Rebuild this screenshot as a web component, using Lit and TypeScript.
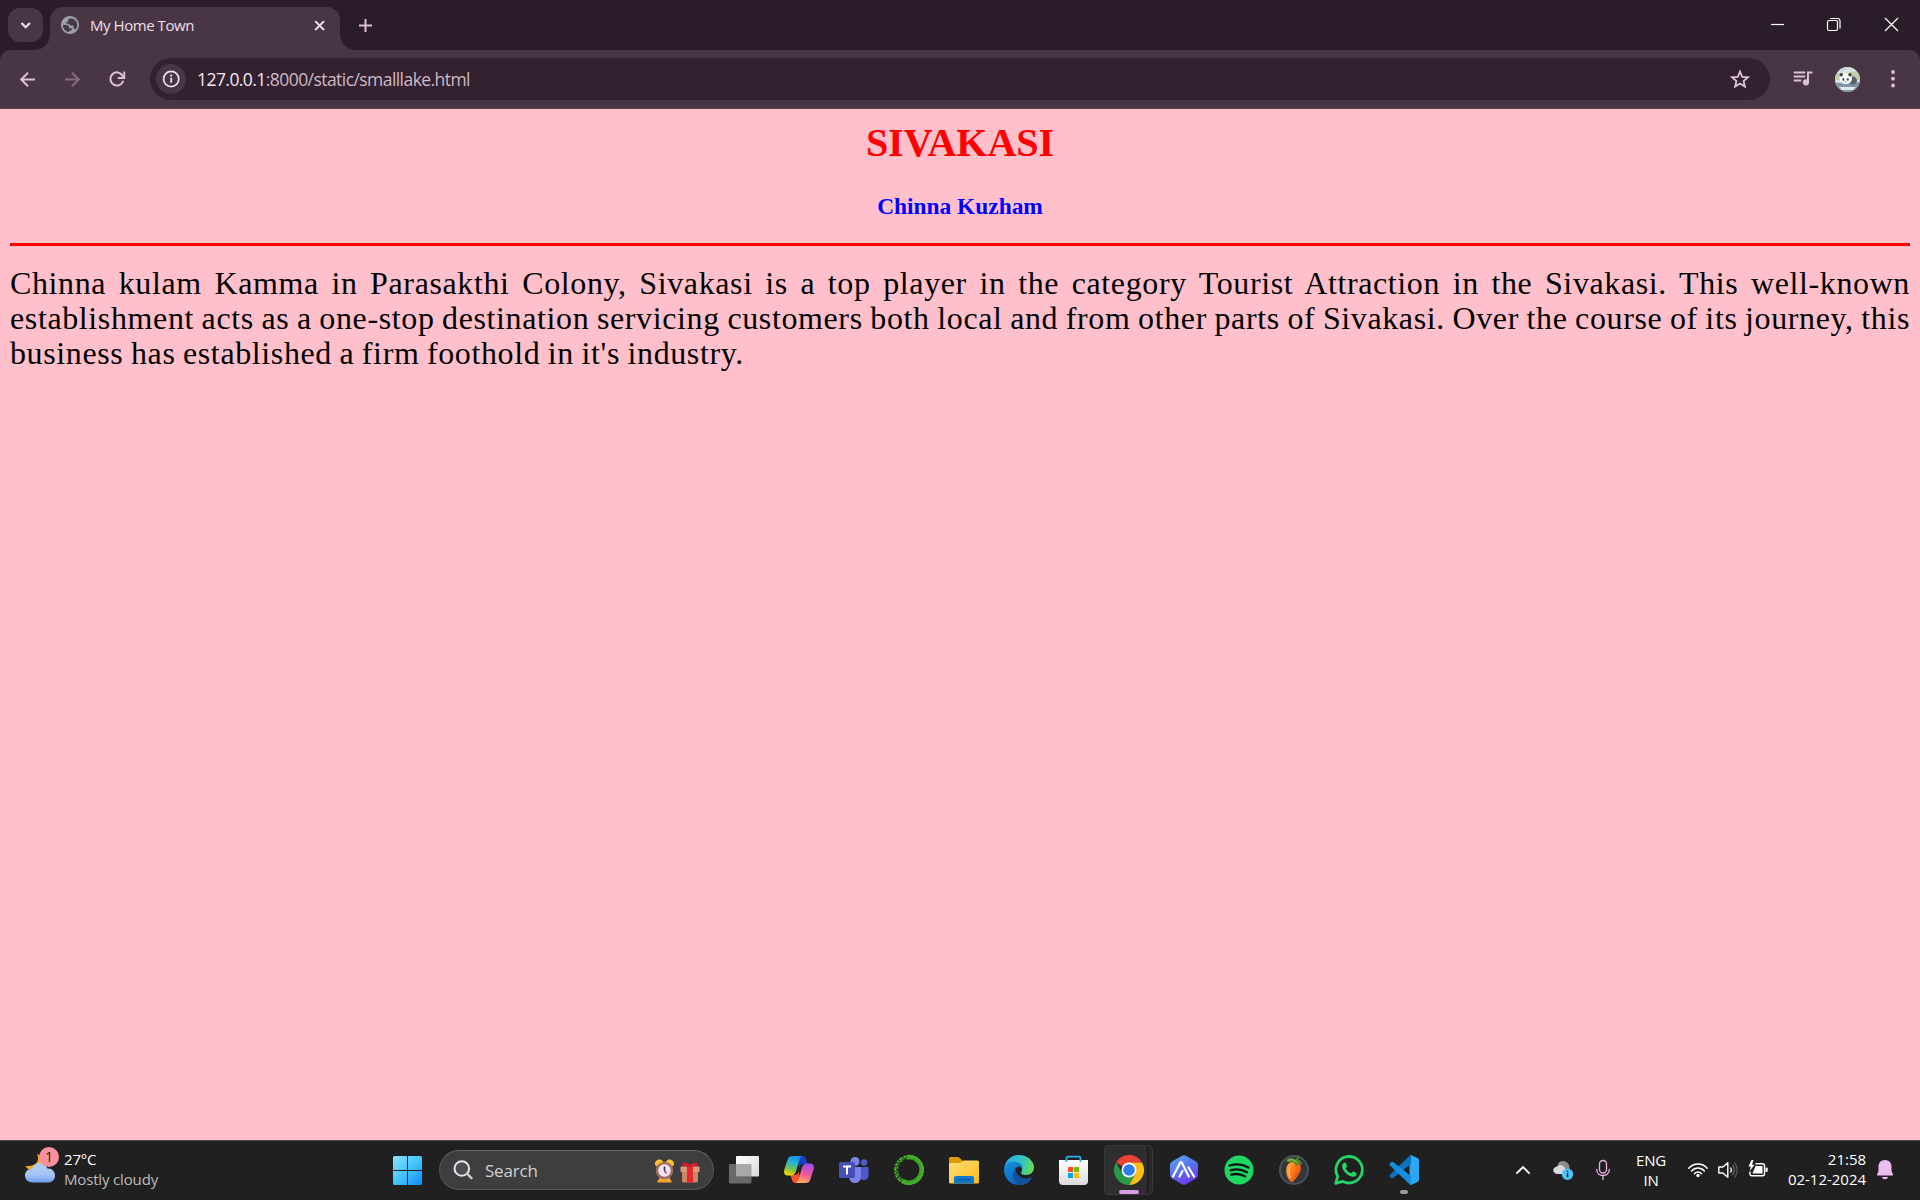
import { LitElement, html, css, svg } from "lit";
import { customElement } from "lit/decorators.js";

const icon = (w: number, h: number, body: unknown) =>
  html`<svg width=${w} height=${h} viewBox="0 0 ${w} ${h}" fill="none">${body}</svg>`;

@customElement("browser-tabs")
class BrowserTabs extends LitElement {
  static styles = css`
    :host { display: block; background: #2b1c29; height: 50px; }
    .strip { display: flex; height: 50px; padding-left: 8px; box-sizing: border-box; }
    svg { display: block; flex: none; }
    .search { margin-top: 8px; width: 35px; height: 34px; border-radius: 12px; background: #493644; }
    .tab { position: relative; margin: 7px 0 0 7px; width: 290px; height: 43px; box-sizing: border-box;
      border-radius: 13px 13px 0 0; background: #493644; display: flex; align-items: center; padding: 0 12px 7px 11px; }
    .tab::before, .tab::after { content: ""; position: absolute; bottom: 0; width: 15px; height: 15px; }
    .tab::before { left: -15px; background: radial-gradient(circle at 0 0, transparent 14.5px, #493644 15.2px); }
    .tab::after { right: -15px; background: radial-gradient(circle at 100% 0, transparent 14.5px, #493644 15.2px); }
    .title { flex: 1; margin-left: 11px; font: 15px/20px "Open Sans", "Noto Sans", sans-serif; letter-spacing: -0.45px; color: #f0dfea; white-space: nowrap; }
    .plus { margin: 16px 0 0 16px; }
    .win { margin-left: auto; display: flex; padding-top: 15px; padding-right: 19px; }
    .max { margin: 0 39px 0 37px; }
  `;
  render() {
    return html`<div class="strip">
      <div class="search">${icon(35, 34, svg`<path d="M13.500 15l4.200 4.200 4.200-4.200" stroke="#f3e0ee" stroke-width="2.200"/>`)}</div>
      <div class="tab">
        <svg width="18" height="18" viewBox="2 2 20 20"><path fill="#9aa0a6" d="M12 2C6.480 2 2 6.480 2 12s4.480 10 10 10 10-4.480 10-10S17.520 2 12 2zm-1 17.930c-3.950-.49-7-3.850-7-7.930h3.500c2.200 0 3.500.8 3.500 2.500v1h3v1.500c0 1.100-.9 1.500-3 1.500v1.430zm6.900-2.540c-.26-.81-1-1.390-1.900-1.390v-2c0-1-.6-1.500-1.700-1.500C12 12.500 11 11.800 11 10.500H8.500C7.600 10.500 7.500 9 8.500 8.500H10V7c0-1.100.9-2.300 2.500-2.300.9 0 2 .1 2.500.4 2.930 1.190 5 3.550 5 6.900 0 2.080-.8 3.970-2.100 5.390z"/></svg>
        <span class="title">My Home Town</span>
        ${icon(17, 17, svg`<path d="M4.200 4.200l8.800 8.800m0-8.800l-8.800 8.800" stroke="#f3e0ee" stroke-width="1.900"/>`)}
      </div>
      <div class="plus">${icon(19, 19, svg`<path d="M9.500 3v13M3 9.500h13" stroke="#dcc0d4" stroke-width="2"/>`)}</div>
      <div class="win">
        ${icon(19, 19, svg`<path d="M3 9.500h13" stroke="#fff" stroke-width="1.200"/>`)}
        <div class="max">${icon(19, 19, svg`<rect x="3.500" y="5.500" width="10" height="10" rx="1.500" stroke="#fff" stroke-width="1.200"/><path d="M6 3.500h7.500a2.500 2.500 0 012.500 2.500v7.500" stroke="#fff" stroke-width="1.200"/>`)}</div>
        ${icon(19, 19, svg`<path d="M3 3l13 13m0-13L3 16" stroke="#fff" stroke-width="1.200"/>`)}
      </div>
    </div>`;
  }
}

@customElement("browser-toolbar")
class BrowserToolbar extends LitElement {
  static styles = css`
    :host { display: block; height: 59px; background: #2b1c29; }
    .bar { display: flex; height: 59px; box-sizing: border-box; align-items: center; background: #493644; border-bottom: 1px solid #574553;
      border-radius: 10px 10px 0 0; padding: 0 23.5px 0 16px; }
    svg { display: block; flex: none; }
    .nav { display: flex; gap: 22px; width: 134px; }
    .omni { display: flex; align-items: center; width: 1620px; height: 42px; box-sizing: border-box; border-radius: 21px; background: #33212f; padding: 0 20px 0 6px; }
    .info { width: 30px; height: 30px; border-radius: 50%; background: #493644; }
    .url { flex: 1; margin-left: 11px; font: 17.5px/24px "Open Sans", "Noto Sans", sans-serif; letter-spacing: -0.56px; color: #cdb9c7; white-space: nowrap; }
    .url b { font-weight: 400; color: #f6e8f2; }
    .right { display: flex; align-items: center; margin-left: auto; }
    .avatar { margin: 0 28.5px 0 22px; }
  `;
  render() {
    return html`<div class="bar">
      <div class="nav">
        ${icon(23, 23, svg`<path d="M19 11.500H5.500M12 4.700l-6.800 6.800 6.800 6.800" stroke="#dcc0d4" stroke-width="2"/>`)}
        ${icon(23, 23, svg`<path d="M4 11.500h13.500M11 4.700l6.800 6.800-6.800 6.800" stroke="#856f7f" stroke-width="2"/>`)}
        ${icon(23, 23, svg`<g transform="translate(-.7 -.5)"><path d="M17.400 8.200A6.600 6.600 0 1018 13.300" stroke="#dcc0d4" stroke-width="2"/><path d="M19 4v6.500h-6.500M18.500 9.500l-3-3" stroke="#dcc0d4" stroke-width="1.900"/></g>`)}
      </div>
      <div class="omni">
        <div class="info">${icon(30, 30, svg`<circle cx="15.200" cy="15" r="7.600" stroke="#f0dfea" stroke-width="1.700"/><path d="M15.200 13.700v5M15.200 10.500v2" stroke="#f0dfea" stroke-width="1.800"/>`)}</div>
        <div class="url"><b>127.0.0.1</b>:8000/static/smalllake.html</div>
        ${icon(20, 20, svg`<path d="M10 2.500l2.200 5.300 5.700.5-4.300 3.700 1.300 5.600-4.900-3-4.900 3 1.300-5.600L2.100 8.300l5.700-.5z" stroke="#dac5d4" stroke-width="1.800"/>`)}
      </div>
      <div class="right">
        ${icon(20, 18, svg`<g transform="translate(.5 -1)"><path d="M.3 3.500h11.500M.3 7.500h11.500M.3 11.500h7.500" stroke="#dcc0d4" stroke-width="2"/><path d="M14.500 13V3.500h4.500" stroke="#dcc0d4" stroke-width="2"/><circle cx="12.500" cy="13.300" r="3.100" fill="#dcc0d4"/></g>`)}
        <div class="avatar">${icon(25, 25, svg`<defs><clipPath id="av"><circle cx="12.500" cy="12.500" r="12.500"/></clipPath></defs><g clip-path="url(#av)"><rect width="25" height="25" fill="#d9e2dc"/><path d="M0 7l25-3v9H0z" fill="#c3cfa6"/><path d="M0 5c5-3 8 1 11-2s9-2 14 0V0H0z" fill="#c5d8e6"/><path d="M0 16l25-1v10H0z" fill="#7d97a8"/><path d="M4 20h17l-3 3H7z" fill="#dfe8ec"/><ellipse cx="17.500" cy="13.500" rx="4.500" ry="4" fill="#56616e"/><ellipse cx="10.800" cy="11.500" rx="6.200" ry="5.500" fill="#fafafa"/><circle cx="6.200" cy="7.800" r="1.700" fill="#3a404a"/><circle cx="15" cy="7.700" r="1.700" fill="#3a404a"/><ellipse cx="8.300" cy="12.500" rx="1" ry="1.400" fill="#4a505c"/><ellipse cx="12.800" cy="12.500" rx="1" ry="1.400" fill="#4a505c"/><ellipse cx="10.500" cy="14.700" rx=".8" ry=".5" fill="#4a505c"/></g>`)}</div>
        ${icon(8, 20, svg`<g fill="#dcc0d4"><circle cx="4" cy="3" r="1.900"/><circle cx="4" cy="9.700" r="1.900"/><circle cx="4" cy="16.500" r="1.900"/></g>`)}
      </div>
    </div>`;
  }
}

@customElement("town-page")
class TownPage extends LitElement {
  static styles = css`
    :host { display: block; height: 1031px; box-sizing: border-box; background: #ffc0cb; padding: 11px 10px 10px; }
    h1 { margin: 0 0 27px; font: bold 40px/46px "Liberation Serif", serif; text-align: center; color: #f00; }
    h3 { margin: 0; font: bold 23.4px/27px "Liberation Serif", serif; text-align: center; color: #00f; }
    .rule { height: 3px; margin-top: 23px; background: #f00; }
    p { margin: 20px 0 0; font: 32px/35px Georgia, "Liberation Serif", serif; letter-spacing: 0.62px; word-spacing: -1.1px; text-align: justify; color: #000; }
  `;
  render() {
    return html`<h1>SIVAKASI</h1>
      <h3>Chinna Kuzham</h3>
      <div class="rule"></div>
      <p>Chinna kulam Kamma in Parasakthi Colony, Sivakasi is a top player in the category Tourist Attraction in the Sivakasi. This well-known establishment acts as a one-stop destination servicing customers both local and from other parts of Sivakasi. Over the course of its journey, this business has established a firm foothold in it's industry.</p>`;
  }
}

const startIcon = svg`<defs><linearGradient id="st" x1="0" y1="0" x2="1" y2="1" gradientUnits="objectBoundingBox"><stop stop-color="#8be3ff"/><stop offset=".5" stop-color="#45c4fc"/><stop offset="1" stop-color="#0a8cf5"/></linearGradient></defs><path d="M1.500 0H14v14H0V1.500Q0 0 1.500 0zM15 0h12.500Q29 0 29 1.500V14H15zM0 15h14v14H1.500Q0 29 0 27.500zM15 15h14v12.500q0 1.500-1.500 1.500H15z" fill="url(#st)"/>`;

const apps = [
  { name: "view", art: svg`<defs><linearGradient id="tv" x1="0" y1="0" x2="1" y2="1"><stop stop-color="#fff"/><stop offset="1" stop-color="#d8d8d8"/></linearGradient></defs><rect x="7" y="1" width="23" height="20.500" rx="1" fill="url(#tv)"/><path d="M7 9h15.500v12.500H7V9z" fill="#a8a8a8"/><path d="M0 10q0-1 1-1h6v12.500h15.500V27q0 1.500-1 1.500H1q-1 0-1-1z" fill="#696969"/>` },
  { name: "copilot", art: svg`<defs><linearGradient id="ca" x1=".6" y1="0" x2=".3" y2="1"><stop stop-color="#1c8fe8"/><stop offset=".4" stop-color="#2bb8c8"/><stop offset=".7" stop-color="#7cc344"/><stop offset="1" stop-color="#ffd400"/></linearGradient><linearGradient id="cb" x1=".6" y1="0" x2=".3" y2="1"><stop stop-color="#a14df0"/><stop offset=".5" stop-color="#f0559a"/><stop offset="1" stop-color="#ffb05c"/></linearGradient></defs><path d="M14 1h4.500c2.300 0 3 1.500 3.600 3.500L23.500 9H20c-3 0-4 1-5 4z" fill="#1740c8"/><path d="M16 28h-4.500c-2.300 0-3-1.500-3.600-3.500L6.500 20H10c3 0 4-1 5-4z" fill="#f4562e"/><path d="M8.500 1H19c-2 0-3 1.500-3.700 4l-3 10.500c-1 3.500-2.500 5-5.500 5H4c-3.500 0-4.600-2.500-3.600-6L3.500 5C4.300 2.300 5.700 1 8.500 1z" fill="url(#ca)"/><path d="M21.500 28H11c2 0 3-1.500 3.700-4l3-10.500c1-3.500 2.500-5 5.500-5H26c3.500 0 4.600 2.500 3.600 6L26.500 24c-.8 2.700-2.200 4-5 4z" fill="url(#cb)"/>` },
  { name: "teams", art: svg`<circle cx="25" cy="7.500" r="3.200" fill="#4f5bd0"/><path d="M20 12h9.500v8.500c0 3-2 4.500-4.500 4.500s-5-1.500-5-5z" fill="#4f58c9"/><circle cx="16" cy="6.500" r="4.500" fill="#7b83eb"/><path d="M10 12h12v9c0 4.500-2.500 7-6 7s-6-2.500-6-7z" fill="#7b83eb"/><rect y="7" width="16" height="16" rx="1.500" fill="#4650b8"/><path d="M4 11.500h8M8 11.500v8" stroke="#fff" stroke-width="2"/>` },
  { name: "conda", art: svg`<path d="M13 2.200a12.800 12.800 0 11-4.500 23.800" stroke="#43b02a" stroke-width="4.400"/><circle cx="15" cy="15" r="13.800" stroke="#43b02a" stroke-width="2.200" stroke-dasharray="3 1 2 .8 4 1"/><circle cx="15" cy="15" r="11.800" stroke="#379b25" stroke-width="1.800" stroke-dasharray="1.500 1.500 3 1"/>` },
  { name: "files", art: svg`<defs><linearGradient id="fo" x1="0" y1="0" x2="1" y2="1"><stop stop-color="#ffe07a"/><stop offset="1" stop-color="#fbb917"/></linearGradient></defs><path d="M0 3.500Q0 2 1.500 2h8l4 3.500v6H0z" fill="#dd9b06"/><path d="M0 8h11l3.500-2.500H28.500Q30 5.500 30 7v20q0 1.500-1.500 1.500h-27Q0 28.500 0 27z" fill="url(#fo)"/><path d="M5 28.500V23q0-2 2-2h16q2 0 2 2v5.500z" fill="#0f78cd"/><path d="M8.500 24.800h13" stroke="#07569c" stroke-width="1.200"/>` },
  { name: "edge", art: svg`<defs><linearGradient id="e1" x1="0" y1=".3" x2="1" y2=".5"><stop stop-color="#28a9ee"/><stop offset=".6" stop-color="#32c7bd"/><stop offset="1" stop-color="#67dc55"/></linearGradient><linearGradient id="e2" x1="0" y1="0" x2=".6" y2="1"><stop stop-color="#1894dc"/><stop offset="1" stop-color="#0b62c2"/></linearGradient></defs><path d="M.4 12.500C1.500 5 7.500 0 15 0c8.500 0 15 6 15 12.500 0 4.500-3.500 7.500-8 7.500-4 0-5.600-1.500-4.800-2.600C20 13.500 16 9 11 9 6 9 2 10.500.4 12.500z" fill="url(#e1)"/><path d="M0 15c0-6 5-9 10.500-8.500C15.500 7 19 10 18.700 13.500 18.500 12 16.500 11.300 15 11.500c-3.500.5-5.500 4-4.500 8.500 1.200 5 5 8.500 9.500 9C9.500 32.500 0 25.500 0 15z" fill="url(#e2)"/><path d="M11.500 14c-4 4-3.500 12.500 3 15.500 5.500 1.500 11-1.500 13-6.500.2-.8-.4-1-1-.7C20 25.500 12.500 22 11.500 14z" fill="#12539d"/>` },
  { name: "store", art: svg`<defs><linearGradient id="ms" x1="0" y1="0" x2="0" y2="1"><stop stop-color="#fff"/><stop offset="1" stop-color="#dcdcdc"/></linearGradient></defs><g transform="translate(-.5 0)"><path d="M8 7V3.200q0-1.500 1.500-1.500h11q1.500 0 1.500 1.500V7" stroke="#27b0ea" stroke-width="1.800"/><path d="M.5 5h29v21q0 4-4 4h-21q-4 0-4-4z" fill="url(#ms)"/><path d="M8 5v2M22 5v2" stroke="#27b0ea" stroke-width="1.800"/><path d="M9.500 12h5v5h-5z" fill="#f25022"/><path d="M15.500 12h5v5h-5z" fill="#7fba00"/><path d="M9.500 18h5v5h-5z" fill="#00a4ef"/><path d="M15.500 18h5v5h-5z" fill="#ffb900"/></g>` },
  { name: "chrome", art: svg`<path d="M15 15L2 7.500A15 15 0 0128 7.500H15z" fill="#ea4335"/><path d="M15 7.500h13A15 15 0 0115 30l6.500-11.300z" fill="#fbbc15"/><path d="M2 7.500A15 15 0 0015 30l6.500-11.300L15 22.500l-6.500-3.700z" fill="#299b48"/><circle cx="15" cy="15" r="7.500" fill="#fff"/><circle cx="15" cy="15" r="5.800" fill="#2d7cf0"/>` },
  { name: "nova", art: svg`<defs><linearGradient id="nv" x1=".2" y1="0" x2=".7" y2="1"><stop stop-color="#55a5ea"/><stop offset=".5" stop-color="#5a6ff0"/><stop offset="1" stop-color="#6f35e8"/></linearGradient></defs><path d="M13 .8q2-1.200 4 0l10 5.700q2 1.200 2 3.500v10q0 2.300-2 3.500l-10 5.700q-2 1.200-4 0L3 23.500Q1 22.300 1 20V10q0-2.300 2-3.500z" fill="url(#nv)"/><path d="M4 21.500L11 8q1-1.800 2 0l6.800 13.500M10.500 21.500l3-5.500M19.500 12.500l5.500 9" stroke="#fff" stroke-width="2.200" stroke-linecap="round" stroke-linejoin="round"/>` },
  { name: "music", art: svg`<circle cx="15" cy="15" r="14.500" fill="#1ed760"/><path d="M5.500 10.500c6.500-2 13.500-1.300 19 2M6.500 15.300c5.500-1.600 11.500-1 16.500 1.900M7.200 19.700c5-1.300 9.500-.8 14 1.700" stroke="#111" stroke-width="2.300" stroke-linecap="round"/>` },
  { name: "fruit", art: svg`<defs><linearGradient id="fl" x1="0" y1="0" x2="1" y2=".7"><stop stop-color="#ffb34a"/><stop offset=".5" stop-color="#ff7b19"/><stop offset="1" stop-color="#d9400c"/></linearGradient></defs><circle cx="15" cy="15" r="14" fill="#30363b" stroke="#4b5257" stroke-width="2"/><path d="M8 11c2-4 5-4.500 8-4 4 .5 6.500 3 6 7-1 6-6 11-9 13.500C9 26 5.500 17 8 11z" fill="url(#fl)"/><path d="M11 12c-1.500 3-1 8 .5 11" stroke="#ffd08a" stroke-width="1.500" opacity=".7"/><path d="M7 6c3-4 7-4 9-1 1-2 3-4 5-4.500C20 2 19.500 3.500 19 5c2 0 4 1.500 4 5-2-1-3-1.500-4-1.500 0 2-1 3-2.500 3 0-2-1-3.500-2.500-4C11.500 6.500 9 8.500 7 6z" fill="#57852c"/><path d="M9 5.500c3-1.500 6-1 9 2" stroke="#91b84a" stroke-width="1.200"/>` },
  { name: "chat", art: svg`<path d="M1.700 28.300l2-7A13.200 13.200 0 119 26.400z" stroke="#25d366" stroke-width="2.800" stroke-linejoin="round"/><path d="M9.500 8c.8-.8 2-.7 2.400.2l1.100 2.600c.4 1-.8 1.900-1.300 2.600 1.400 2.500 3 3.900 5.500 4.900.8-.8 1.500-2.200 2.500-1.700l2.500 1.300c1 .6.300 2.700-1 3.400-2.500 1.400-6.500-.4-9.200-3C9 15.600 6.500 11 9.500 8z" fill="#25d366"/>` },
  { name: "code", art: svg`<path d="M22 0l7 3.300q1 .5 1 1.700v20q0 1.200-1 1.700L22 30l-1.500-1V1z" fill="#29a8f3"/><path d="M.8 19.800q-1 .8 0 1.700l1.600 1.500q.8.700 1.800 0L22 9V0L20.500.8z" fill="#0b72bd"/><path d="M.8 10.200q-1-.8 0-1.700L2.400 7q.8-.7 1.800 0L22 21v9l-1.500-.8z" fill="#1490df"/>` },
];

@customElement("task-bar")
class TaskBar extends LitElement {
  static styles = css`
    :host { display: block; height: 60px; font: 15px/20px "Open Sans", "Noto Sans", sans-serif; color: #fff; }
    .bar { height: 60px; box-shadow: inset 0 1px #4b4a4b; background: #202020; display: flex; align-items: center; }
    svg { display: block; flex: none; overflow: visible; }
    .weather { display: flex; width: 393px; box-sizing: border-box; padding-left: 24px; }
    .wtext { margin: -1px 0 1px 9px; letter-spacing: -0.16px; white-space: nowrap; }
    .sky { position: relative; width: 31px; height: 40px; }
    .badge { position: absolute; left: 15px; top: -3px; width: 20px; height: 20px; border-radius: 50%; background: #fb8f9c; color: #222; font-size: 14px; text-align: center; }
    .muted { color: #bcbcbc; }
    .find { display: flex; align-items: center; margin-left: 17px; width: 275px; height: 40px; box-sizing: border-box; padding: 0 13px 0 14px;
      border: 1px solid #545454; border-top-color: #666; border-radius: 20px; background: #3e3e3e; }
    .find span { flex: 1; margin: 2px 0 0 11px; font-size: 17px; color: #d0d0d0; letter-spacing: -0.2px; }
    .gifts { display: flex; gap: 6px; }
    .apps { display: flex; margin-left: 2px; }
    .app { position: relative; width: 55px; height: 60px; display: flex; align-items: center; justify-content: center; }
    .chrome::before { content: ""; position: absolute; left: 3px; top: 5px; width: 49px; height: 50px; box-sizing: border-box; border: 1px solid #383838; border-radius: 5px; background: #272727; }
    .chrome .face { box-sizing: border-box; position: absolute; left: 3px; top: 5px; width: 44px; height: 50px; border: 1px solid #3a3a3a; border-right-color: #181818; border-radius: 5px; background: #2e2e2e; }
    .app svg { position: relative; }
    .chrome .mark, .code .mark { position: absolute; bottom: 6px; height: 4px; border-radius: 2px; }
    .chrome .mark { width: 20px; background: #dc9ee2; }
    .code .mark { width: 8px; background: #9a9a9a; }
    .tray { display: flex; align-items: center; margin-left: auto; padding-right: 27px; }
    .cloud { margin: 0 22px 0 22px; }
    .lang { width: 40px; margin: 0 17px 1px 20px; text-align: center; letter-spacing: -0.2px; }
    .status { display: flex; gap: 10px; margin-right: -1px; }
    .clock { width: 88px; margin: 0 11px 2px 11px; text-align: right; letter-spacing: -0.02px; white-space: nowrap; }
  `;
  render() {
    return html`<div class="bar">
      <div class="weather">
        <div class="sky">
          ${icon(31, 40, svg`<defs><linearGradient id="cl" x1="0" y1="0" x2="0" y2="1"><stop stop-color="#b2d0fa"/><stop offset=".6" stop-color="#a3c4f5"/><stop offset="1" stop-color="#6f9cea"/></linearGradient></defs><path d="M13 4c3 6 0 13-11.500 12C4 22 16 21 18 13c.5-4-1.500-8-5-9z" fill="#f9a825"/><path d="M9 32.500c-5 0-8-3-8-7s3-7 7-6.500C9 15 12 13 15.500 13S22 15 23.500 18.500c4-.5 7.500 2.500 7.500 7s-3 7-7.500 7z" fill="url(#cl)"/>`)}
          <span class="badge">1</span>
        </div>
        <div class="wtext"><div>27°C</div><div class="muted">Mostly cloudy</div></div>
      </div>
      ${icon(29, 29, startIcon)}
      <div class="find">
        ${icon(20, 20, svg`<g transform="translate(-.7 0)"><circle cx="8.500" cy="8.500" r="7.300" fill="#4a4e52" stroke="#e4e8ea" stroke-width="2"/><path d="M13.700 13.700l4.500 4.500" stroke="#c8cacc" stroke-width="2.500" stroke-linecap="round"/></g>`)}
        <span>Search</span>
        <div class="gifts">
          ${icon(20, 24, svg`<g transform="translate(.5 1)"><path d="M3 22l2-3h10l2 3q.5 1.500-1 1.500H4Q2.500 23.500 3 22z" fill="#f3a62c"/><path d="M.5 6C0 2 3.500-.5 7 1l2 2-6 5zM19.500 6C20 2 16.500-.5 13 1l-2 2 6 5z" fill="#fcc22e"/><circle cx="10" cy="11.500" r="8.700" fill="#a66b61"/><circle cx="10" cy="11.500" r="6.200" fill="#e9e6f5"/><path d="M10 7.500V12" stroke="#3b3049" stroke-width="1.600"/><path d="M10 12l2 2.500" stroke="#e8324c" stroke-width="1.500"/></g>`)}
          ${icon(20, 24, svg`<g transform="translate(0 1)"><path d="M2 12h16v10q0 1.500-1.500 1.500h-13Q2 23.500 2 22z" fill="#c98763"/><rect x=".5" y="7.500" width="19" height="5.500" rx="1" fill="#d99b77"/><path d="M7 7.500h6v16H7z" fill="#e6282e"/><path d="M10 8L2 6.500 3 3.500l4 .5 3 2 3-2 4-.5 1 3z" fill="#dc1c2e"/></g>`)}
        </div>
      </div>
      <div class="apps">
        ${apps.map((a) => html`<div class="app ${a.name}">
          ${a.name === "chrome" ? html`<div class="face"></div>` : ""}
          ${icon(30, 30, a.art)}
          ${a.name === "chrome" || a.name === "code" ? html`<div class="mark"></div>` : ""}
        </div>`)}
      </div>
      <div class="tray">
        ${icon(16, 16, svg`<path d="M2 11l6-6 6 6" stroke="#fff" stroke-width="1.800" stroke-linecap="round"/>`)}
        <div class="cloud">${icon(20, 20, svg`<path d="M5 3.500c3-4 9-3 11 1.500L17 11H6z" fill="#8c8c8c"/><path d="M4 14c-5-1-5-6.500 0-7.500 3-3 7-1 8 2V14z" fill="#d9d9d9"/><circle cx="14.500" cy="14.300" r="5.700" fill="#4cc2ff"/><path d="M14.500 13.300v4M14.500 10.800v1.500" stroke="#1c1c1c" stroke-width="1.500"/>`)}</div>
        ${icon(16, 22, svg`<rect x="4.500" y="1.500" width="7" height="12.500" rx="3.500" stroke="#e9b3ea" stroke-width="1.300"/><path d="M1.700 10.500c0 8 12.600 8 12.600 0M8 16.500v4" stroke="#e9b3ea" stroke-width="1.300" stroke-linecap="round"/>`)}
        <div class="lang"><div>ENG</div><div>IN</div></div>
        <div class="status">
          ${icon(20, 20, svg`<path d="M.8 8.200c5-5.600 13.400-5.600 18.400 0M3.600 11c3.600-4 9.200-4 12.800 0M6.400 13.700c2-2.200 5.200-2.200 7.200 0" stroke="#fff" stroke-width="1.500" stroke-linecap="round"/><circle cx="10" cy="15.500" r="1.700" fill="#fff"/>`)}
          ${icon(20, 20, svg`<path d="M.8 7h4l5-4.300v14.600L4.800 13h-4z" stroke="#fff" stroke-width="1.400" stroke-linejoin="round"/><path d="M12.500 7.500c1 1.500 1 3.500 0 5" stroke="#fff" stroke-width="1.300"/><path d="M14.500 5c2.200 3 2.200 7 0 10" stroke="#666" stroke-width="1.300"/><path d="M16.500 2.500c3.600 4.500 3.600 10.500 0 15" stroke="#555" stroke-width="1.300"/>`)}
          ${icon(20, 20, svg`<path d="M7.500 3.700H14.500q2 0 2 2v8.100q0 2-2 2H4q-2 0-2-2V11.500" stroke="#fff" stroke-width="1.400"/><path d="M7.500 6H14.500v7.500H4.500z" fill="#fff"/><path d="M17.500 7.500h1q1.200 0 1.200 1v2.500q0 1-1.200 1h-1z" fill="#fff"/><path d="M3.500 0L.5 6.500h2.200L1.800 11 6.500 4.800H4L5.500 0z" fill="#fff"/>`)}
        </div>
        <div class="clock"><div>21:58</div><div>02-12-2024</div></div>
        ${icon(16, 20, svg`<path d="M8 0c4 0 6.500 2.800 6.500 6.500v4.500l1.500 3.500q.3 1-.8 1H.8q-1.100 0-.8-1L1.500 11V6.500C1.500 2.800 4 0 8 0zM5 17h6c-.5 3-5.500 3-6 0z" fill="#edbcee"/>`)}
      </div>
    </div>`;
  }
}

@customElement("app-root")
class AppRoot extends LitElement {
  static styles = css`:host { display: block; width: 1920px; height: 1200px; overflow: hidden; }`;
  render() {
    return html`<browser-tabs></browser-tabs><browser-toolbar></browser-toolbar><town-page></town-page><task-bar></task-bar>`;
  }
}
